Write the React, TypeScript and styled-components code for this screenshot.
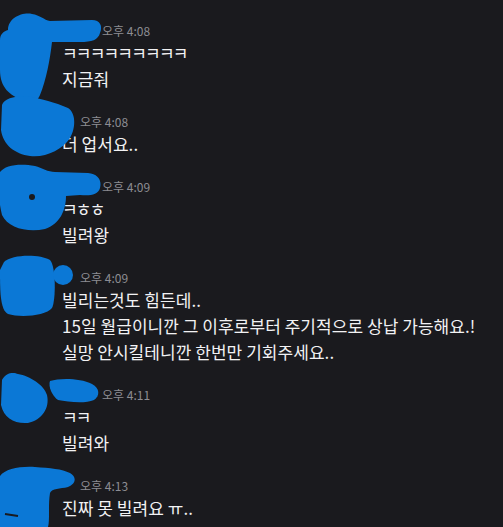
import React from 'react';
import styled, { createGlobalStyle } from 'styled-components';

const GlobalStyle = createGlobalStyle`
  html, body {
    margin: 0;
    background-color: #1a1a1e;
  }
  body {
    font-family: 'Noto Sans CJK KR', 'Noto Sans', sans-serif;
  }
`;

const Page = styled.div`
  position: relative;
  width: 503px;
  height: 527px;
  overflow: hidden;
  box-sizing: border-box;
  padding-top: 21px;
  display: flex;
  flex-direction: column;
  gap: 20px;
`;

const Group = styled.div`
  display: grid;
  grid-template-columns: 62px 1fr;
`;

const Content = styled.div`
  display: flex;
  flex-direction: column;
`;

const Header = styled.div`
  display: flex;
  align-items: center;
  height: 19px;
`;

const Name = styled.span<{ $width: number }>`
  display: inline-block;
  width: ${(p) => p.$width}px;
`;

const Time = styled.span`
  font-size: 12px;
  color: #8d8d93;
`;

const Line = styled.div<{ $jamo?: boolean }>`
  font-size: 17px;
  line-height: 26px;
  color: #f2f2f4;
  white-space: nowrap;
  letter-spacing: ${(p) => (p.$jamo ? '-1.8px' : '0.05px')};
`;

const Scribbles = styled.svg`
  position: absolute;
  top: 0;
  left: 0;
  pointer-events: none;
`;

type Message = {
  time: string;
  nameWidth: number;
  lines: { text: string; jamo?: boolean }[];
};

const messages: Message[] = [
  { time: '오후 4:08', nameWidth: 40, lines: [{ text: 'ㅋㅋㅋㅋㅋㅋㅋㅋㅋ', jamo: true }, { text: '지금줘' }] },
  { time: '오후 4:08', nameWidth: 18, lines: [{ text: '더 업서요..' }] },
  { time: '오후 4:09', nameWidth: 40, lines: [{ text: 'ㅋㅎㅎ', jamo: true }, { text: '빌려왕' }] },
  {
    time: '오후 4:09',
    nameWidth: 18,
    lines: [
      { text: '빌리는것도 힘든데..' },
      { text: '15일 월급이니깐 그 이후로부터 주기적으로 상납 가능해요.!' },
      { text: '실망 안시킬테니깐 한번만 기회주세요..' },
    ],
  },
  { time: '오후 4:11', nameWidth: 40, lines: [{ text: 'ㅋㅋ', jamo: true }, { text: '빌려와' }] },
  { time: '오후 4:13', nameWidth: 18, lines: [{ text: '진짜 못 빌려요 ㅠ..' }] },
];

const BLUE = '#0b78d6';
const DARK = '#1a1a1e';

const App = () => {
  return (
    <Page>
      <GlobalStyle />
      {messages.map((m, i) => (
        <Group key={i}>
          <div />
          <Content>
            <Header>
              <Name $width={m.nameWidth} />
              <Time>{m.time}</Time>
            </Header>
            {m.lines.map((l, j) => (
              <Line key={j} $jamo={l.jamo}>
                {l.text}
              </Line>
            ))}
          </Content>
        </Group>
      ))}
      <Scribbles width="503" height="527" viewBox="0 0 503 527">
        <g fill={BLUE}>
          <path d="M 8 30 C 8 18, 22 12, 32 14 C 40 15, 44 20, 50 21 L 92 20 C 100 20, 103 26, 100 33 C 98 40, 92 42, 80 42 L 52 42 C 50 60, 46 80, 40 95 C 36 104, 28 106, 22 100 C 10 95, 0 88, 0 70 L 0 40 C 0 34, 4 31, 8 30 Z" />
          <path d="M 2 105 C 5 97, 20 95, 32 97 C 40 99, 55 102, 68 108 C 76 113, 76 128, 70 138 C 62 150, 45 158, 30 156 C 15 154, 3 145, 1 130 Z" />
          <path d="M 0 172 C 5 165, 20 163, 35 166 C 42 168, 48 172, 55 172 L 88 173 C 98 174, 102 180, 100 188 C 98 195, 90 196, 80 195 L 66 196 C 66 210, 60 224, 45 229 C 28 233, 8 228, 2 215 C -2 200, -2 180, 0 172 Z" />
          <path d="M 4 262 C 12 254, 40 254, 50 260 C 56 266, 56 300, 52 308 C 46 316, 20 318, 8 314 C 0 310, 0 290, 0 270 Z" />
          <circle cx="63" cy="275" r="10" />
          <path d="M 2 380 C 6 372, 14 372, 18 374 C 30 376, 44 385, 47 395 C 50 408, 42 420, 28 423 C 14 424, 4 418, 1 405 Z" />
          <path d="M 50 381 C 60 378, 80 378, 92 384 C 100 388, 100 396, 94 400 C 85 404, 68 402, 58 400 C 52 396, 48 386, 50 381 Z" />
          <path d="M 0 476 C 5 469, 20 466, 35 467 C 50 468, 62 469, 70 473 C 77 477, 76 484, 68 487 C 60 489, 52 488, 50 493 C 48 505, 50 520, 48 527 L 0 527 Z" />
        </g>
        <circle cx="32" cy="197" r="3" fill={DARK} />
        <path d="M 5 514 L 18 516" stroke={DARK} strokeWidth="2" />
      </Scribbles>
    </Page>
  );
};

export default App;
